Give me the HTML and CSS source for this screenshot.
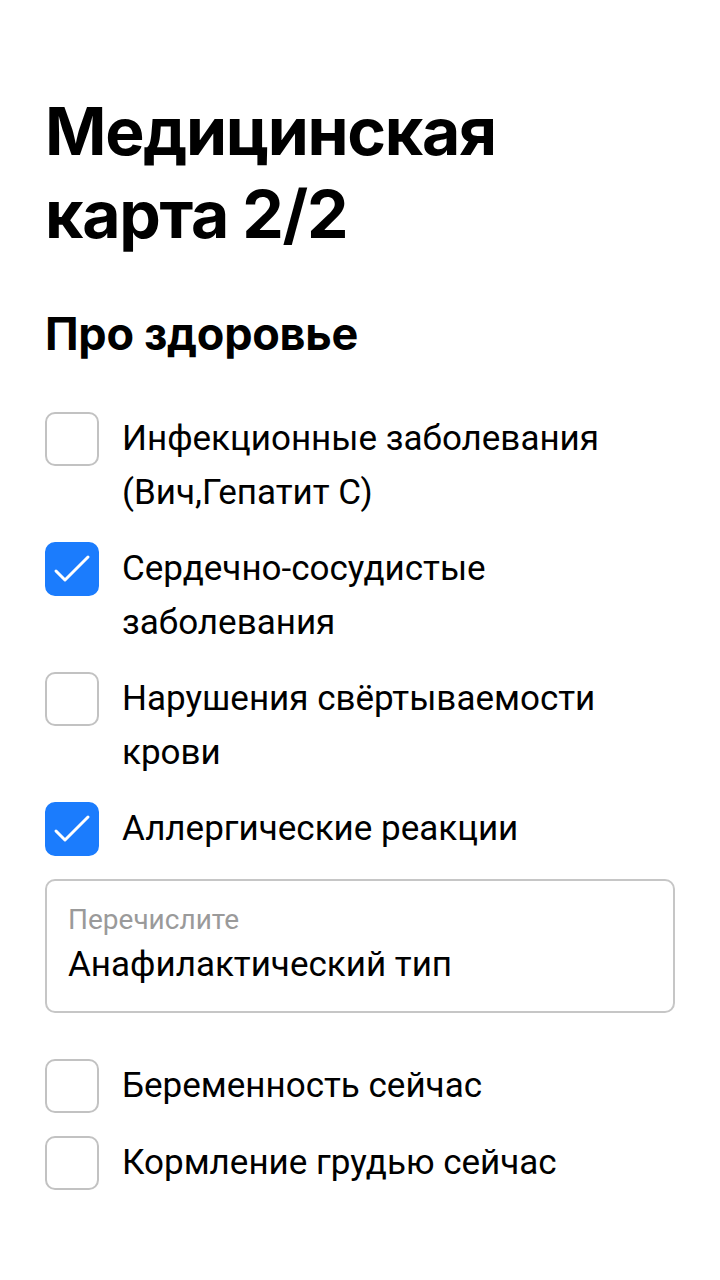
FILE: index.html
```html
<!DOCTYPE html>
<html lang="ru">
<head>
<meta charset="utf-8">
<link rel="stylesheet" href="styles.css">
</head>
<body>
<main class="page">
  <h1 class="title">Медицинская<br>карта 2/2</h1>
  <h2 class="subtitle">Про здоровье</h2>
  <ul class="list">
    <li class="item">
      <span class="box"></span>
      <span class="label">Инфекционные заболевания (Вич,Гепатит С)</span>
    </li>
    <li class="item">
      <span class="box checked"><svg viewBox="0 0 54 54" class="tick"><path d="M11 29 L20 38 L43 15" /></svg></span>
      <span class="label">Сердечно-сосудистые заболевания</span>
    </li>
    <li class="item">
      <span class="box"></span>
      <span class="label">Нарушения свёртываемости крови</span>
    </li>
    <li class="item">
      <span class="box checked"><svg viewBox="0 0 54 54" class="tick"><path d="M11 29 L20 38 L43 15" /></svg></span>
      <span class="label">Аллергические реакции</span>
    </li>
  </ul>
  <div class="field">
    <div class="field-label">Перечислите</div>
    <div class="field-value">Анафилактический тип</div>
  </div>
  <ul class="list list-bottom">
    <li class="item">
      <span class="box"></span>
      <span class="label">Беременность сейчас</span>
    </li>
    <li class="item">
      <span class="box"></span>
      <span class="label">Кормление грудью сейчас</span>
    </li>
  </ul>
</main>
</body>
</html>
```
FILE: styles.css
```css
* { box-sizing: border-box; }
html, body { margin: 0; padding: 0; background: #fff; }
body { font-family: Roboto, "Liberation Sans", Arial, sans-serif; color: #000; }
.page { padding: 90px 45px 0 45px; }
.title {
  margin: 0;
  font-family: Inter, "Noto Sans", sans-serif;
  font-weight: 700;
  font-size: 66px;
  line-height: 83px;
  letter-spacing: -1.3px;
}
.subtitle {
  margin: 50px 0 0;
  font-family: Inter, "Noto Sans", sans-serif;
  font-weight: 700;
  font-size: 45px;
  line-height: 56px;
  letter-spacing: -0.3px;
}
.list { list-style: none; margin: 0; padding: 0; display: flex; flex-direction: column; gap: 22px; }
.list:first-of-type { margin-top: 50px; }
.item { display: flex; align-items: flex-start; gap: 23px; }
.box {
  flex: 0 0 54px;
  width: 54px; height: 54px;
  border: 2px solid #c2c2c2;
  border-radius: 10px;
  display: flex;
}
.box.checked { background: #1b7cfd; border-color: #1b7cfd; }
.tick { width: 54px; height: 54px; margin: -2px; }
.tick path { fill: none; stroke: #fff; stroke-width: 3; stroke-linecap: round; stroke-linejoin: round; }
.label { font-size: 35px; line-height: 54px; }
.field {
  margin-top: 23px;
  border: 2px solid #c6c6c6;
  border-radius: 10px;
  height: 134px;
  padding: 22px 20px 0 21px;
}
.field-label { font-size: 28px; line-height: 34px; color: #9a9a9a; }
.field-value { font-size: 35px; line-height: 48px; margin-top: 4px; }
.list-bottom { margin-top: 46px; gap: 23px; }
```
